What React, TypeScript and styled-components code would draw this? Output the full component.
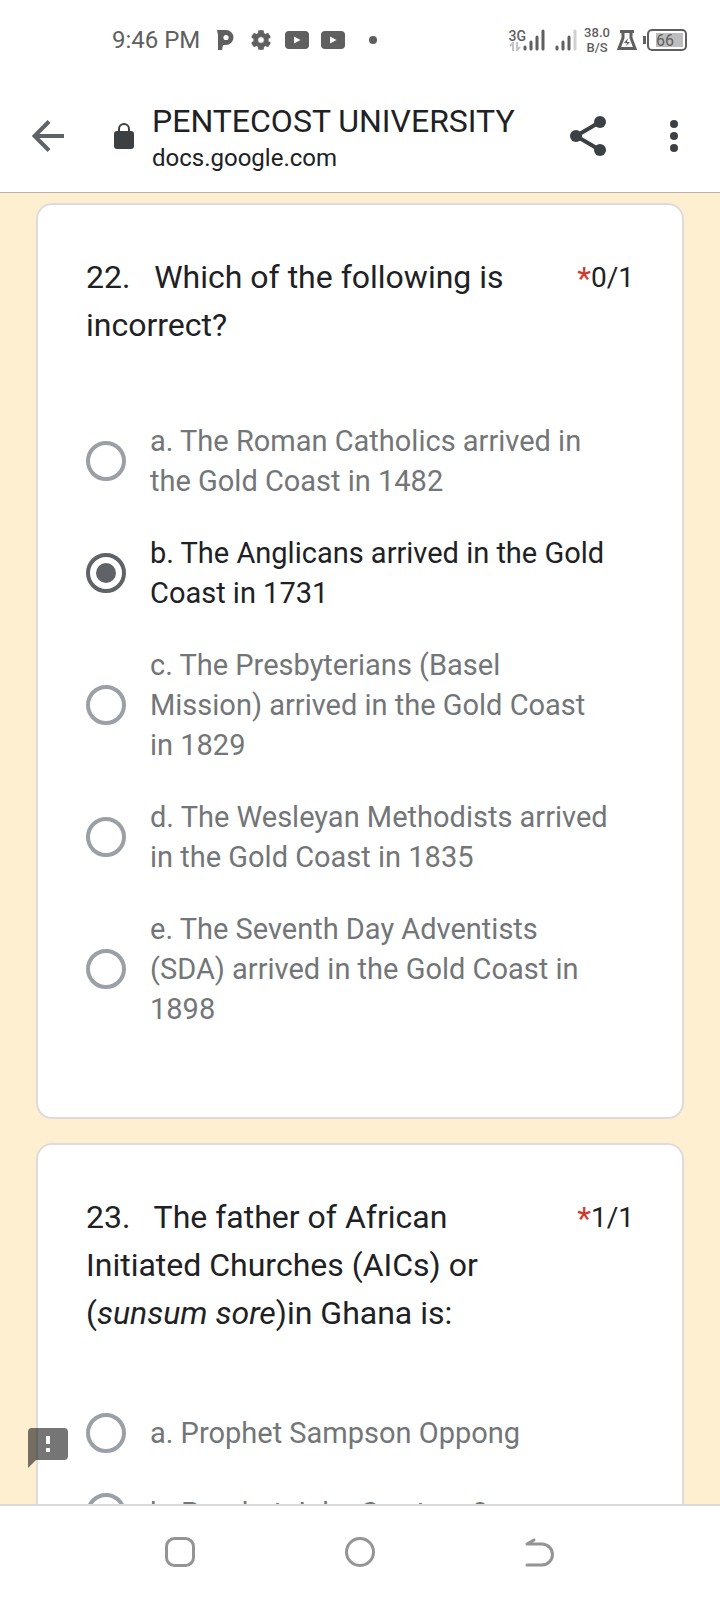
import React from "react";
import styled, { createGlobalStyle } from "styled-components";

const GlobalStyle = createGlobalStyle`
  * { box-sizing: border-box; }
  body { margin: 0; font-family: Roboto, "Liberation Sans", sans-serif; color: #202124; background: #fff; }
  button { border: 0; padding: 0; background: none; color: inherit; cursor: pointer; }
  svg { display: block; }
`;

const Screen = styled.div`
  display: flex;
  flex-direction: column;
  height: 100vh;
`;

const StatusBar = styled.header`
  flex: none;
  display: flex;
  align-items: center;
  justify-content: space-between;
  height: 80px;
  padding: 0 33px 0 112px;
  color: #5f5f5f;
`;

const StatusGroup = styled.div<{ $gap: number }>`
  display: flex;
  align-items: center;
  gap: ${(p) => p.$gap}px;
`;

const Clock = styled.time`
  font-size: 24px;
  line-height: 32px;
`;

const NetworkSpeed = styled.div`
  width: 28px;
  font-size: 13px;
  font-weight: 500;
  line-height: 15px;
  text-align: center;
`;

const BrowserBar = styled.nav`
  flex: none;
  display: flex;
  align-items: center;
  height: 113px;
  padding: 0 24px;
  border-bottom: 1px solid #b9b3a8;
  color: #3c4043;
`;

const IconButton = styled.button`
  flex: none;
  display: grid;
  place-items: center;
  width: 48px;
  height: 48px;
`;

const PageInfo = styled.div`
  flex: 1;
  display: flex;
  align-items: center;
  gap: 16px;
  margin-left: 40px;
  min-width: 0;
`;

const PageText = styled.div`
  padding-top: 2px;
  color: #202124;
`;

const PageTitle = styled.div`
  font-size: 32px;
  line-height: 42px;
  white-space: nowrap;
`;

const PageHost = styled.div`
  font-size: 24px;
  line-height: 32px;
`;

const Actions = styled.div`
  display: flex;
  gap: 38px;
  margin-right: -2px;
`;

const Content = styled.main`
  position: relative;
  flex: 1;
  min-height: 0;
  overflow: hidden;
  padding: 10px 36px 0;
  background: #feefd1;
`;

const Card = styled.section`
  margin-bottom: 24px;
  padding: 48px 48px 88px;
  border: 2px solid #dddbdb;
  border-radius: 16px;
  background: #fff;
`;

const Heading = styled.div`
  display: flex;
  justify-content: space-between;
  gap: 48px;
  margin-bottom: 72px;
`;

const Question = styled.h2`
  flex: 1;
  margin: 0;
  font-size: 32px;
  font-weight: 400;
  line-height: 48px;
  white-space: pre-wrap;
`;

const Score = styled.div`
  display: flex;
  font-size: 28px;
  line-height: 50px;
`;

const Required = styled.span`
  font-size: 32px;
  color: #cf3a2e;
`;

const Options = styled.div`
  display: flex;
  flex-direction: column;
  gap: 32px;
  padding-right: 20px;
`;

const Option = styled.label<{ $chosen: boolean }>`
  display: flex;
  align-items: center;
  gap: 24px;
  min-height: 48px;
  font-size: 29px;
  line-height: 40px;
  color: ${(p) => (p.$chosen ? "#202124" : "#737678")};
`;

const Radio = styled.input`
  appearance: none;
  flex: none;
  display: grid;
  place-items: center;
  width: 40px;
  height: 40px;
  margin: 0;
  border: 4px solid #9aa0a6;
  border-radius: 50%;

  &:checked { border-color: #5f6368; }
  &:checked::before {
    content: "";
    width: 20px;
    height: 20px;
    border-radius: 50%;
    background: #5f6368;
  }
`;

const ReportButton = styled.button`
  position: absolute;
  left: 28px;
  bottom: 36px;
`;

const SystemNav = styled.footer`
  flex: none;
  display: flex;
  justify-content: space-around;
  align-items: center;
  height: 96px;
  padding: 0 12.5% 2px;
  border-top: 2px solid #dadada;
  color: #949494;
`;

const SettingsIcon = () => (
  <svg width="22" height="20" viewBox="2 2 22 20" fill="currentColor">
    <path d="M19.14 12.94c.04-.3.06-.61.06-.94s-.02-.64-.07-.94l2.03-1.58a.49.49 0 0 0 .12-.61l-1.92-3.32a.49.49 0 0 0-.59-.22l-2.39.96a7 7 0 0 0-1.62-.94l-.36-2.54a.48.48 0 0 0-.48-.41h-3.84a.47.47 0 0 0-.47.41l-.36 2.54c-.59.24-1.13.57-1.62.94l-2.39-.96a.48.48 0 0 0-.59.22L2.74 8.87a.47.47 0 0 0 .12.61l2.03 1.58a6 6 0 0 0 0 1.88l-2.03 1.58a.49.49 0 0 0-.12.61l1.92 3.32c.12.22.37.29.59.22l2.39-.96c.5.38 1.03.7 1.62.94l.36 2.54c.05.24.24.41.48.41h3.84c.24 0 .44-.17.47-.41l.36-2.54a7 7 0 0 0 1.62-.94l2.39.96c.22.08.47 0 .59-.22l1.92-3.32a.47.47 0 0 0-.12-.61zM12 15.2a3.2 3.2 0 1 1 0-6.400 3.2 3.2 0 0 1 0 6.400z" stroke="currentColor" strokeWidth=".6" />
  </svg>
);

const VideoIcon = () => (
  <svg width="24" height="18" viewBox="0 0 24 18">
    <rect width="24" height="18" rx="4" fill="currentColor" />
    <path d="M9 5.500v7L15.500 9z" fill="#fff" />
  </svg>
);

const SignalIcon = ({ weak = false }: { weak?: boolean }) => (
  <svg width="22" height="22" viewBox="0 0 22 22" stroke="currentColor" strokeWidth="3" strokeLinecap="round">
    <path d="M2 18v2M8 13v7M14 8v12" />
    <path d="M20 2v18" stroke={weak ? "#d0d0d0" : "currentColor"} />
  </svg>
);

const MobileData = styled.div`
  display: flex;
  align-items: flex-end;
  margin-right: 4px;
`;

const NetworkType = styled.div`
  display: grid;
  justify-items: start;
  margin-right: -3px;
  font-size: 14px;
  font-weight: 500;
  line-height: 12px;
`;

const questions = [
  {
    id: "q22",
    title: <>22.   Which of the following is incorrect?</>,
    score: "0/1",
    chosen: 1,
    options: [
      "a. The Roman Catholics arrived in the Gold Coast in 1482",
      "b. The Anglicans arrived in the Gold Coast in 1731",
      "c. The Presbyterians (Basel Mission) arrived in the Gold Coast in 1829",
      "d. The Wesleyan Methodists arrived in the Gold Coast in 1835",
      "e. The Seventh Day Adventists (SDA) arrived in the Gold Coast in 1898",
    ],
  },
  {
    id: "q23",
    title: <>23.   The father of African Initiated Churches (AICs) or (<em>sunsum sore</em>)in Ghana is:</>,
    score: "1/1",
    chosen: -1,
    options: ["a. Prophet Sampson Oppong", "b. Prophet John Swatson?"],
  },
];

export default function App() {
  return (
    <Screen>
      <GlobalStyle />
      <StatusBar>
        <StatusGroup $gap={17}>
          <Clock>9:46 PM</Clock>
          <StatusGroup $gap={12}>
            <svg width="22" height="20" viewBox="0 0 22 20">
              <path d="M0 0h9a7.300 7.300 0 0 1 0 15H6l-1 5H1V5z" fill="currentColor" />
              <circle cx="9" cy="7.500" r="2.600" fill="#fff" />
            </svg>
            <SettingsIcon />
            <VideoIcon />
            <VideoIcon />
            <svg width="20" height="8" viewBox="0 0 20 8"><circle cx="16" cy="4" r="4" fill="currentColor" /></svg>
          </StatusGroup>
        </StatusGroup>
        <StatusGroup $gap={6}>
          <MobileData>
            <NetworkType>
              3G
              <svg width="12" height="9" viewBox="0 0 12 9" fill="none" stroke="#c4c4c4" strokeWidth="2">
                <path d="M4 9V1L1 4M8 0v8l3-3" />
              </svg>
            </NetworkType>
            <SignalIcon />
          </MobileData>
          <SignalIcon weak />
          <NetworkSpeed>38.0<br />B/S</NetworkSpeed>
          <svg width="20" height="20" viewBox="0 0 20 20" fill="none" stroke="currentColor" strokeWidth="3">
            <path d="M3 1.500h14M6 1v7L2 18.500h16L14 8V1" />
            <path d="M11 8l-4 5h3l-1 3 4-4h-3z" fill="currentColor" stroke="none" />
          </svg>
          <svg width="44" height="22" viewBox="0 0 44 22">
            <path d="M1.500 7v8" stroke="currentColor" strokeWidth="3" />
            <rect x="5" y="1" width="38" height="20" rx="4" fill="none" stroke="currentColor" strokeWidth="2" />
            <rect x="13" y="4" width="27" height="14" fill="#bdbdbd" />
            <text x="22" y="17" textAnchor="middle" fontSize="16" fill="currentColor">66</text>
          </svg>
        </StatusGroup>
      </StatusBar>

      <BrowserBar>
        <IconButton aria-label="Back">
          <svg width="32" height="32" viewBox="0 0 32 32" fill="none" stroke="#5f6368" strokeWidth="4">
            <path d="M32 16H3M17 1.500 2.500 16 17 30.500" />
          </svg>
        </IconButton>
        <PageInfo>
          <svg width="24" height="28" viewBox="0 0 24 28">
            <rect x="2" y="9" width="20" height="18" rx="3" fill="currentColor" />
            <path d="M7 10V7a5 5 0 0 1 10 0v3" fill="none" stroke="currentColor" strokeWidth="2" />
          </svg>
          <PageText>
            <PageTitle>PENTECOST UNIVERSITY</PageTitle>
            <PageHost>docs.google.com</PageHost>
          </PageText>
        </PageInfo>
        <Actions>
          <IconButton aria-label="Share">
            <svg width="36" height="40" viewBox="0 0 36 40" fill="currentColor">
              <path d="M30 6 6 20l24 14" fill="none" stroke="currentColor" strokeWidth="4" />
              <circle cx="30" cy="6" r="6" />
              <circle cx="6" cy="20" r="6" />
              <circle cx="30" cy="34" r="6" />
            </svg>
          </IconButton>
          <IconButton aria-label="More options">
            <svg width="8" height="32" viewBox="0 0 8 32" fill="currentColor">
              <circle cx="4" cy="4" r="4" />
              <circle cx="4" cy="16" r="4" />
              <circle cx="4" cy="28" r="4" />
            </svg>
          </IconButton>
        </Actions>
      </BrowserBar>

      <Content>
        {questions.map((q) => (
          <Card key={q.id} aria-labelledby={q.id}>
            <Heading>
              <Question id={q.id}>{q.title}</Question>
              <Score><Required>*</Required>{q.score}</Score>
            </Heading>
            <Options role="radiogroup" aria-labelledby={q.id}>
              {q.options.map((text, i) => (
                <Option key={text} $chosen={i === q.chosen}>
                  <Radio type="radio" name={q.id} defaultChecked={i === q.chosen} />
                  <span>{text}</span>
                </Option>
              ))}
            </Options>
          </Card>
        ))}
        <ReportButton aria-label="Report a problem">
          <svg width="40" height="40" viewBox="0 0 40 40">
            <path d="M4 0h32a4 4 0 0 1 4 4v24a4 4 0 0 1-4 4H8l-8 8V4a4 4 0 0 1 4-4z" fill="#000" fillOpacity=".54" />
            <path d="M18 8h4v8h-4zM18 20h4v4h-4z" fill="#fff" />
          </svg>
        </ReportButton>
      </Content>

      <SystemNav>
        <IconButton aria-label="Recent apps">
          <svg width="32" height="32" viewBox="0 0 32 32" fill="none" stroke="currentColor" strokeWidth="3">
            <rect x="2.500" y="2.500" width="27" height="27" rx="8" />
          </svg>
        </IconButton>
        <IconButton aria-label="Home">
          <svg width="32" height="32" viewBox="0 0 32 32" fill="none" stroke="currentColor" strokeWidth="3">
            <circle cx="16" cy="16" r="13.500" />
          </svg>
        </IconButton>
        <IconButton aria-label="Go back">
          <svg width="32" height="32" viewBox="0 0 32 32" fill="none" stroke="currentColor" strokeWidth="3" strokeLinecap="round" strokeLinejoin="round">
            <path d="M10 4 3 8h15a10.500 10.500 0 0 1 0 21H3" />
          </svg>
        </IconButton>
      </SystemNav>
    </Screen>
  );
}
